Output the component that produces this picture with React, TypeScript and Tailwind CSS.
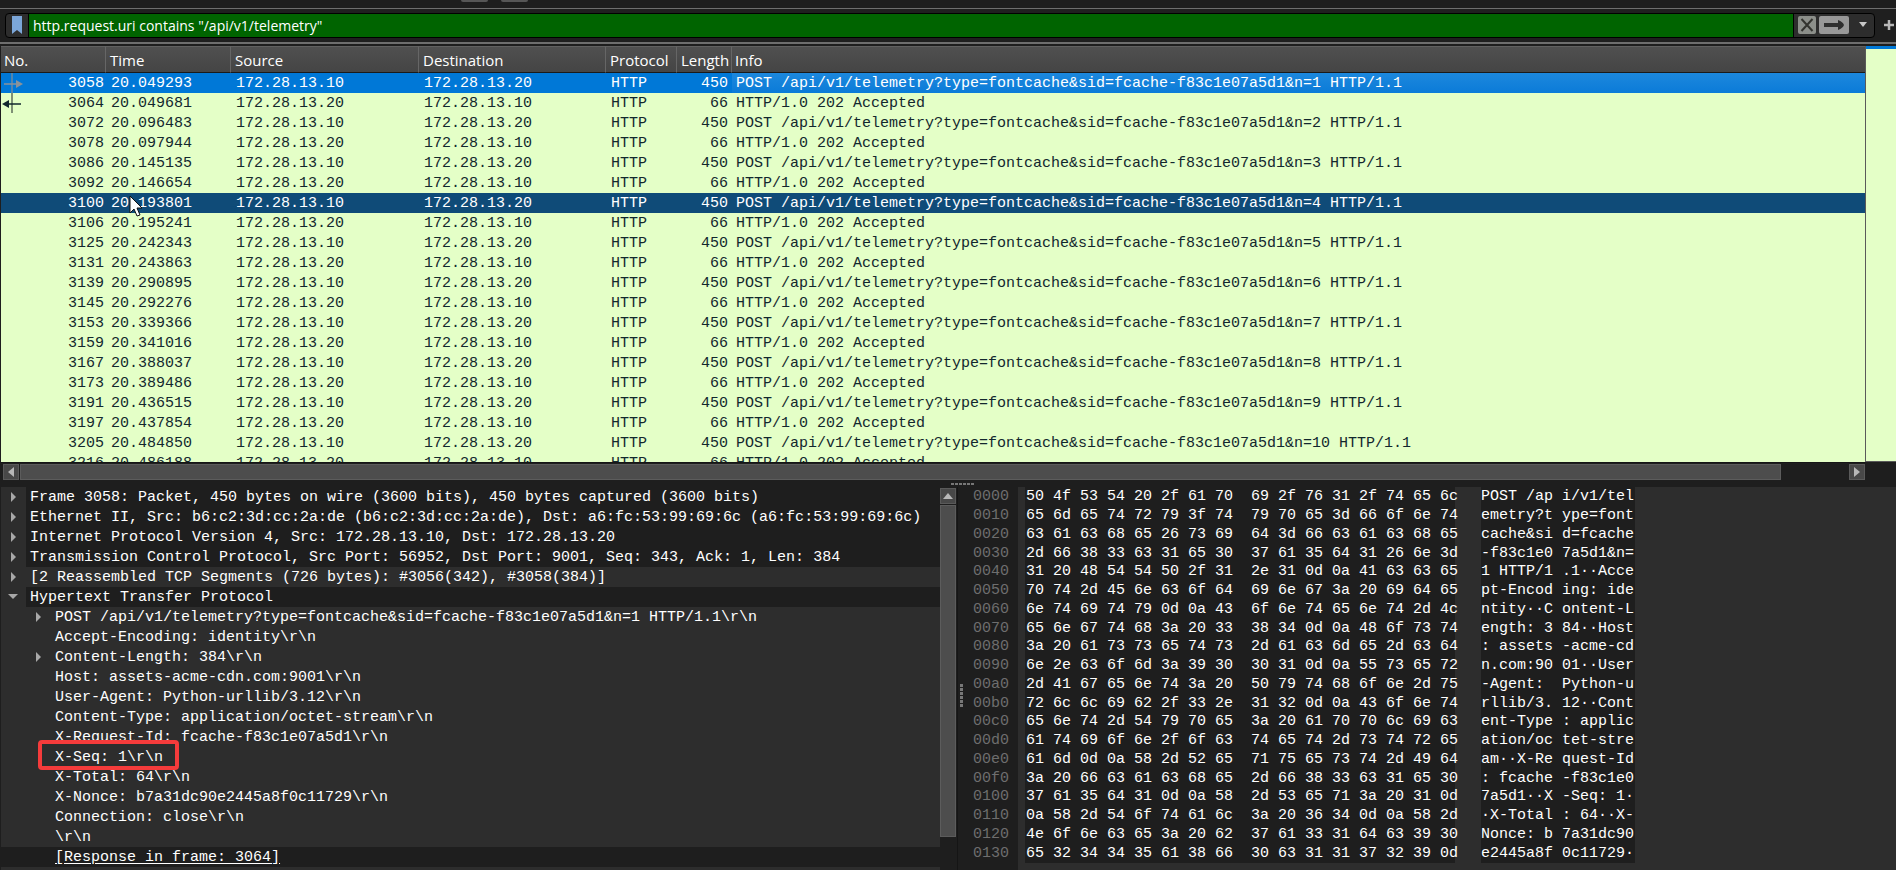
import { ReactNode } from 'react';

interface Packet {
  no: number;
  time: string;
  request: boolean;
  n?: number;
}

const packets: Packet[] = [
  { no: 3058, time: '20.049293', request: true, n: 1 },
  { no: 3064, time: '20.049681', request: false },
  { no: 3072, time: '20.096483', request: true, n: 2 },
  { no: 3078, time: '20.097944', request: false },
  { no: 3086, time: '20.145135', request: true, n: 3 },
  { no: 3092, time: '20.146654', request: false },
  { no: 3100, time: '20.193801', request: true, n: 4 },
  { no: 3106, time: '20.195241', request: false },
  { no: 3125, time: '20.242343', request: true, n: 5 },
  { no: 3131, time: '20.243863', request: false },
  { no: 3139, time: '20.290895', request: true, n: 6 },
  { no: 3145, time: '20.292276', request: false },
  { no: 3153, time: '20.339366', request: true, n: 7 },
  { no: 3159, time: '20.341016', request: false },
  { no: 3167, time: '20.388037', request: true, n: 8 },
  { no: 3173, time: '20.389486', request: false },
  { no: 3191, time: '20.436515', request: true, n: 9 },
  { no: 3197, time: '20.437854', request: false },
  { no: 3205, time: '20.484850', request: true, n: 10 },
  { no: 3216, time: '20.486188', request: false },
];

const SELECTED = 3058;
const HOVERED = 3100;

interface DetailRow {
  text: string;
  level: 0 | 1;
  arrow?: 'closed' | 'open';
  kind?: 'header' | 'link';
  marked?: boolean;
}

const details: DetailRow[] = [
  { text: 'Frame 3058: Packet, 450 bytes on wire (3600 bits), 450 bytes captured (3600 bits)', level: 0, arrow: 'closed', kind: 'header' },
  { text: 'Ethernet II, Src: b6:c2:3d:cc:2a:de (b6:c2:3d:cc:2a:de), Dst: a6:fc:53:99:69:6c (a6:fc:53:99:69:6c)', level: 0, arrow: 'closed', kind: 'header' },
  { text: 'Internet Protocol Version 4, Src: 172.28.13.10, Dst: 172.28.13.20', level: 0, arrow: 'closed', kind: 'header' },
  { text: 'Transmission Control Protocol, Src Port: 56952, Dst Port: 9001, Seq: 343, Ack: 1, Len: 384', level: 0, arrow: 'closed', kind: 'header' },
  { text: '[2 Reassembled TCP Segments (726 bytes): #3056(342), #3058(384)]', level: 0, arrow: 'closed' },
  { text: 'Hypertext Transfer Protocol', level: 0, arrow: 'open', kind: 'header' },
  { text: 'POST /api/v1/telemetry?type=fontcache&sid=fcache-f83c1e07a5d1&n=1 HTTP/1.1\\r\\n', level: 1, arrow: 'closed' },
  { text: 'Accept-Encoding: identity\\r\\n', level: 1 },
  { text: 'Content-Length: 384\\r\\n', level: 1, arrow: 'closed' },
  { text: 'Host: assets-acme-cdn.com:9001\\r\\n', level: 1 },
  { text: 'User-Agent: Python-urllib/3.12\\r\\n', level: 1 },
  { text: 'Content-Type: application/octet-stream\\r\\n', level: 1 },
  { text: 'X-Request-Id: fcache-f83c1e07a5d1\\r\\n', level: 1 },
  { text: 'X-Seq: 1\\r\\n', level: 1, marked: true },
  { text: 'X-Total: 64\\r\\n', level: 1 },
  { text: 'X-Nonce: b7a31dc90e2445a8f0c11729\\r\\n', level: 1 },
  { text: 'Connection: close\\r\\n', level: 1 },
  { text: '\\r\\n', level: 1 },
  { text: '[Response in frame: 3064]', level: 1, kind: 'link' },
];

// offset, hex bytes, ascii
const bytes: [string, string, string][] = [
  ['0000', '50 4f 53 54 20 2f 61 70  69 2f 76 31 2f 74 65 6c', 'POST /ap i/v1/tel'],
  ['0010', '65 6d 65 74 72 79 3f 74  79 70 65 3d 66 6f 6e 74', 'emetry?t ype=font'],
  ['0020', '63 61 63 68 65 26 73 69  64 3d 66 63 61 63 68 65', 'cache&si d=fcache'],
  ['0030', '2d 66 38 33 63 31 65 30  37 61 35 64 31 26 6e 3d', '-f83c1e0 7a5d1&n='],
  ['0040', '31 20 48 54 54 50 2f 31  2e 31 0d 0a 41 63 63 65', '1 HTTP/1 .1··Acce'],
  ['0050', '70 74 2d 45 6e 63 6f 64  69 6e 67 3a 20 69 64 65', 'pt-Encod ing: ide'],
  ['0060', '6e 74 69 74 79 0d 0a 43  6f 6e 74 65 6e 74 2d 4c', 'ntity··C ontent-L'],
  ['0070', '65 6e 67 74 68 3a 20 33  38 34 0d 0a 48 6f 73 74', 'ength: 3 84··Host'],
  ['0080', '3a 20 61 73 73 65 74 73  2d 61 63 6d 65 2d 63 64', ': assets -acme-cd'],
  ['0090', '6e 2e 63 6f 6d 3a 39 30  30 31 0d 0a 55 73 65 72', 'n.com:90 01··User'],
  ['00a0', '2d 41 67 65 6e 74 3a 20  50 79 74 68 6f 6e 2d 75', '-Agent:  Python-u'],
  ['00b0', '72 6c 6c 69 62 2f 33 2e  31 32 0d 0a 43 6f 6e 74', 'rllib/3. 12··Cont'],
  ['00c0', '65 6e 74 2d 54 79 70 65  3a 20 61 70 70 6c 69 63', 'ent-Type : applic'],
  ['00d0', '61 74 69 6f 6e 2f 6f 63  74 65 74 2d 73 74 72 65', 'ation/oc tet-stre'],
  ['00e0', '61 6d 0d 0a 58 2d 52 65  71 75 65 73 74 2d 49 64', 'am··X-Re quest-Id'],
  ['00f0', '3a 20 66 63 61 63 68 65  2d 66 38 33 63 31 65 30', ': fcache -f83c1e0'],
  ['0100', '37 61 35 64 31 0d 0a 58  2d 53 65 71 3a 20 31 0d', '7a5d1··X -Seq: 1·'],
  ['0110', '0a 58 2d 54 6f 74 61 6c  3a 20 36 34 0d 0a 58 2d', '·X-Total : 64··X-'],
  ['0120', '4e 6f 6e 63 65 3a 20 62  37 61 33 31 64 63 39 30', 'Nonce: b 7a31dc90'],
  ['0130', '65 32 34 34 35 61 38 66  30 63 31 31 37 32 39 0d', 'e2445a8f 0c11729·'],
];

const columns = [
  { name: 'No.', width: 'w-[105px]', pad: 'pl-[3px]' },
  { name: 'Time', width: 'w-[125px]', pad: 'pl-1' },
  { name: 'Source', width: 'w-[188px]', pad: 'pl-1' },
  { name: 'Destination', width: 'w-[187px]', pad: 'pl-1' },
  { name: 'Protocol', width: 'w-[71px]', pad: 'pl-1' },
  { name: 'Length', width: 'w-[55px]', pad: 'pl-1' },
  { name: 'Info', width: '', pad: 'pl-[3px]' },
];

function Grip({ vertical = false }: { vertical?: boolean }) {
  return (
    <div className={vertical ? 'flex flex-col gap-px' : 'flex gap-px'}>
      {[0, 1, 2, 3, 4, 5].map((i) => (
        <span key={i} className={vertical ? 'block h-[3px] w-[3px] bg-[#777777]' : 'block h-[2px] w-[3px] bg-[#777777]'} />
      ))}
    </div>
  );
}

function ScrollButton({ label, children }: { label: string; children: ReactNode }) {
  return (
    <button
      type="button"
      aria-label={label}
      className="flex h-4 w-4 shrink-0 items-center justify-center border border-[#5a5a5a] bg-[#484848]"
    >
      {children}
    </button>
  );
}

function FilterBar() {
  return (
    <div className="flex h-[33px] items-center border-t border-[#6e6e6e] bg-[#1f1f1f] pl-[5px]">
      <form className="flex h-[25px] min-w-0 flex-1 overflow-hidden rounded border border-black bg-[#2d2d2d]">
        <button type="button" aria-label="Filter bookmarks" className="flex w-[22px] shrink-0 items-center justify-center">
          <svg width="10" height="18" viewBox="0 0 10 18">
            <path d="M0 0h10v18l-5-4-5 4z" fill="#7ba6d8" />
          </svg>
        </button>
        <input
          aria-label="Display filter"
          defaultValue={'http.request.uri contains "/api/v1/telemetry"'}
          className="min-w-0 flex-1 border-x border-black bg-[#006400] px-1 pt-px text-sm text-white outline-none"
        />
        <div className="flex w-[64px] shrink-0 items-center pl-[4px]">
          <button type="button" aria-label="Clear filter" className="rounded-[2px] bg-[#8c8f8a]">
            <svg width="18" height="18" viewBox="0 0 18 18">
              <path d="M3.5 3l11 12M14.5 3l-11 12" stroke="#33342f" strokeWidth="2" fill="none" />
            </svg>
          </button>
          <button type="button" aria-label="Apply filter" className="ml-[3px] rounded-[2px] bg-[#989898]">
            <svg width="30" height="18" viewBox="0 0 30 18">
              <path d="M5 7h14V4q5 2 6 5-1 3-6 5v-3H5z" fill="#2f2f2f" />
            </svg>
          </button>
        </div>
        <button type="button" aria-label="Recent filters" className="flex w-4 shrink-0 items-center">
          <svg width="10" height="10" viewBox="0 0 10 10">
            <path d="M1 2h8L5 7z" fill="#c8c8c8" />
          </svg>
        </button>
      </form>
      <button type="button" aria-label="Add filter button" className="mx-[9px] mr-[2px]">
        <svg width="10" height="10" viewBox="0 0 10 10">
          <path d="M5 0v10M0 5h10" stroke="#b8b8b8" strokeWidth="2.5" />
        </svg>
      </button>
    </div>
  );
}

function FlowMark({ no }: { no: number }) {
  if (no === 3058) {
    return (
      <svg className="block" width="24" height="20" viewBox="0 0 24 20">
        <path d="M11 0v20" stroke="#6b8aa3" strokeWidth="1.5" />
        <path d="M3 11h12" stroke="#8a9299" strokeWidth="1.5" />
        <path d="M15 7l7 4-7 4z" fill="#8a9299" />
      </svg>
    );
  }
  if (no === 3064) {
    return (
      <svg className="block" width="24" height="20" viewBox="0 0 24 20">
        <path d="M11 0v20" stroke="#5d6b5a" strokeWidth="1.5" />
        <path d="M7 11h13" stroke="#12272e" strokeWidth="1.5" />
        <path d="M8 7l-7 4 7 4z" fill="#12272e" />
      </svg>
    );
  }
  return null;
}

function PacketRow({ packet }: { packet: Packet }) {
  const { no, time, request, n } = packet;
  const selected = no === SELECTED;
  const color = selected
    ? 'bg-[#0078d7] text-white'
    : no === HOVERED
      ? 'bg-[#0f4b78] text-white'
      : 'text-[#12272e]';

  return (
    <tr className={`h-5 ${color}`}>
      <td className="p-0">
        <div className="flex h-5 justify-between pr-[2px]">
          <span>
            <FlowMark no={no} />
          </span>
          <span className="pt-[2px]">{no}</span>
        </div>
      </td>
      <td className="p-0 pt-[2px] pl-[5px]">{time}</td>
      <td className="p-0 pt-[2px] pl-[5px]">{request ? '172.28.13.10' : '172.28.13.20'}</td>
      <td className="p-0 pt-[2px] pl-[5px]">{request ? '172.28.13.20' : '172.28.13.10'}</td>
      <td className="p-0 pt-[2px] pl-[5px]">HTTP</td>
      <td className="p-0 pt-[2px] pr-[4px] text-right">{request ? 450 : 66}</td>
      <td className={`p-0 pt-[2px] pl-1 ${selected ? 'bg-linear-to-b from-[#1c88dd] to-[#0a7bd8]' : ''}`}>
        {request
          ? `POST /api/v1/telemetry?type=fontcache&sid=fcache-f83c1e07a5d1&n=${n} HTTP/1.1`
          : 'HTTP/1.0 202 Accepted'}
      </td>
    </tr>
  );
}

function PacketList() {
  return (
    <div className="flex h-[434px]">
      <div className="flex min-w-0 flex-1 flex-col pl-px">
        <div className="h-[416px] overflow-hidden bg-[#e4ffc7]">
          <table className="w-full table-fixed border-separate border-spacing-0 whitespace-pre font-['Liberation_Mono',monospace] text-[15px] leading-[18px]">
            <thead>
              <tr className="bg-linear-to-b from-[#505050] to-[#444444] font-['Open_Sans','Noto_Sans',sans-serif] text-white">
                {columns.map(({ name, width, pad }) => (
                  <th
                    key={name}
                    className={`h-[27px] ${width} ${pad} border-t border-r border-b border-t-[#606060] border-r-[#666666] border-b-[#1a1a1a] py-0 pr-0 text-left font-normal last:border-r-0`}
                  >
                    {name}
                  </th>
                ))}
              </tr>
            </thead>
            <tbody>
              {packets.map((packet) => (
                <PacketRow key={packet.no} packet={packet} />
              ))}
            </tbody>
          </table>
        </div>
        {/* Horizontal scroll bar */}
        <div className="flex h-[18px] items-center border-t border-[#161616] pl-[2px]">
          <ScrollButton label="Scroll left">
            <svg width="6" height="10" viewBox="0 0 6 10">
              <path d="M6 0v10L0 5z" fill="#b8b8b8" />
            </svg>
          </ScrollButton>
          <div className="mr-[68px] ml-px h-4 flex-1 border border-[#5c5c5c] bg-[#4d4d4d]" />
          <ScrollButton label="Scroll right">
            <svg width="6" height="10" viewBox="0 0 6 10">
              <path d="M0 0v10l6-5z" fill="#b8b8b8" />
            </svg>
          </ScrollButton>
        </div>
      </div>
      {/* Minimap */}
      <div className="h-[416px] w-[31px] border-b border-l border-[#5a5a5a] bg-[#e4ffc7]">
        <div className="h-[3px] bg-[#0078d7]" />
      </div>
    </div>
  );
}

function TreeArrow({ state }: { state?: 'closed' | 'open' }) {
  if (!state) return null;
  return (
    <svg width="10" height="10" viewBox="0 0 10 10">
      <path d={state === 'open' ? 'M0 2h10L5 7z' : 'M3 0v10l5-5z'} fill="#a8a8a8" />
    </svg>
  );
}

function PacketDetails() {
  return (
    <div className="flex w-[50.5%] shrink-0">
      <ul className="min-w-0 flex-1 overflow-hidden bg-[#2d2d2d] leading-[22px]">
        {details.map(({ text, level, arrow, kind, marked }) => (
          <li key={text} className={`flex h-5 ${kind === 'link' ? 'bg-[#1e1e1e]' : ''}`}>
            <span className={`flex shrink-0 items-center ${level === 0 ? 'w-[25px] pl-[7px]' : 'w-[50px] pl-8'}`}>
              <TreeArrow state={arrow} />
            </span>
            <span className={`relative flex-1 pl-1 ${kind === 'header' ? 'bg-[#1e1e1e]' : ''}`}>
              {kind === 'link' ? (
                <a href="#frame-3064" className="underline underline-offset-2">
                  {text}
                </a>
              ) : (
                text
              )}
              {marked && (
                <span className="absolute -top-[7px] -left-[13px] z-10 h-[30px] w-[141px] rounded border-4 border-[#f53b3b]" />
              )}
            </span>
          </li>
        ))}
      </ul>
      {/* Vertical scroll bar */}
      <div className="flex w-[18px] flex-col items-center border-r border-[#151515] pt-px">
        <ScrollButton label="Scroll up">
          <svg width="10" height="6" viewBox="0 0 10 6">
            <path d="M0 6h10L5 0z" fill="#b8b8b8" />
          </svg>
        </ScrollButton>
        <div className="mt-px h-[332px] w-4 border border-[#5c5c5c] bg-[#4d4d4d]" />
      </div>
    </div>
  );
}

function ByteColumn({ lines, className }: { lines: string[]; className: string }) {
  return (
    <div className={`flex h-[376px] shrink-0 flex-col pt-px leading-[18px] ${className}`}>
      {lines.map((line) => (
        <span key={line} className="flex flex-1 items-center">
          {line}
        </span>
      ))}
    </div>
  );
}

function PacketBytes() {
  return (
    <div className="flex min-w-0 flex-1">
      <div className="ml-[2px] flex w-[5px] items-center pt-[34px]">
        <Grip vertical />
      </div>
      <ByteColumn lines={bytes.map(([offset]) => offset)} className="w-[53px] pl-[8px] text-[#6e6e6e]" />
      <div className="flex min-w-0 flex-1 items-start gap-[26px] bg-[#2d2d2d] pl-[7px]">
        <ByteColumn lines={bytes.map(([, hex]) => hex)} className="w-[430px] bg-[#1e1e1e] pl-px" />
        <ByteColumn lines={bytes.map(([, , ascii]) => ascii)} className="w-[154px] bg-[#1e1e1e]" />
      </div>
    </div>
  );
}

export default function App() {
  return (
    <main className="relative h-screen min-h-[870px] overflow-hidden bg-[#1e1e1e] font-['Open_Sans','Noto_Sans',sans-serif] text-[15px] text-white">
      {/* Bottom edge of the main toolbar */}
      <div className="flex h-2 gap-[13px] pl-[461px]">
        <span className="h-[2px] w-[27px] rounded-b-xs bg-[#565656]" />
        <span className="h-[2px] w-[27px] rounded-b-xs bg-[#565656]" />
      </div>
      <FilterBar />
      <div className="mt-px mb-[2px] h-[2px] bg-[#6e6e6e]" />
      <PacketList />
      <div className="flex h-[7px] items-center justify-center pl-[28px]">
        <Grip />
      </div>
      <div className="flex h-[383px] whitespace-pre pl-px font-['Liberation_Mono',monospace]">
        <PacketDetails />
        <PacketBytes />
      </div>
      {/* Mouse pointer */}
      <svg className="absolute top-[195px] left-[129px]" width="14" height="22" viewBox="0 0 14 22">
        <path d="M1 1v17l4-4 3 7 3-1-3-7h5z" fill="#ffffff" stroke="#111111" />
      </svg>
    </main>
  );
}
